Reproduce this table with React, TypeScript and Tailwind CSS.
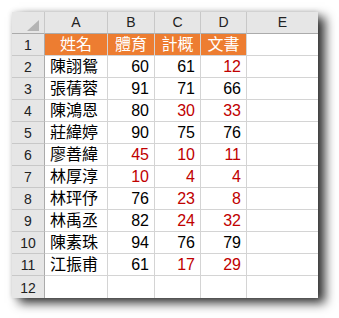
import React from "react";

const rows: [string, number, number, number][] = [
  ["陳詡鴛", 60, 61, 12],
  ["張蒨蓉", 91, 71, 66],
  ["陳鴻恩", 80, 30, 33],
  ["莊緯婷", 90, 75, 76],
  ["廖善緯", 45, 10, 11],
  ["林厚淳", 10, 4, 4],
  ["林玶伃", 76, 23, 8],
  ["林禹丞", 82, 24, 32],
  ["陳素珠", 94, 76, 79],
  ["江振甫", 61, 17, 29],
];

const font = { fontFamily: '"Liberation Sans", "Noto Sans CJK TC", sans-serif' };

function ColHead({ label, last }: { label: string; last?: boolean }) {
  return (
    <div
      className={`h-[22px] bg-[#e6e6e6] border-b border-b-[#ababab] ${last ? "" : "border-r border-r-[#c8c8c8]"} flex items-center justify-center text-[14px] text-[#222]`}
    >
      {label}
    </div>
  );
}

function RowHead({ n }: { n: number }) {
  return (
    <div className="h-[22px] bg-[#e6e6e6] border-r border-r-[#ababab] border-b border-b-[#c8c8c8] flex items-center justify-center pt-[2px] text-[14px] text-[#222]">
      {n}
    </div>
  );
}

function Num({ v }: { v: number }) {
  return (
    <div
      className={`h-[22px] border-r border-b border-[#d4d4d4] flex items-center justify-end pr-[5px] pt-[1px] text-[16px] ${v < 60 ? "text-[#c00000]" : "text-black"}`}
    >
      {v}
    </div>
  );
}

export default function App() {
  return (
    <div className="w-[339px] h-[318px] bg-white p-[12px]" style={font}>
      <div className="w-[306px] bg-white shadow-[7px_5px_10px_rgba(0,0,0,0.8),0_0_5px_rgba(0,0,0,0.15)]">
        <div className="grid grid-cols-[33px_63px_47px_46px_46px_71px]">
          <div className="h-[22px] bg-[#e6e6e6] border-r border-r-[#c8c8c8] border-b border-b-[#ababab] relative">
            <svg className="absolute right-[5px] bottom-[2px]" width="12" height="11" viewBox="0 0 12 11">
              <polygon points="12,0 12,11 0,11" fill="#b4b4b4" />
            </svg>
          </div>
          <ColHead label="A" />
          <ColHead label="B" />
          <ColHead label="C" />
          <ColHead label="D" />
          <ColHead label="E" last />

          <RowHead n={1} />
          {["姓名", "體育", "計概", "文書"].map((h) => (
            <div
              key={h}
              className="h-[22px] bg-[#ed7d31] border-r border-b border-[#d4d4d4] flex items-center justify-center text-[16px] text-white"
            >
              {h}
            </div>
          ))}
          <div className="h-[22px] border-b border-[#d4d4d4]" />

          {rows.map((r, i) => (
            <React.Fragment key={i}>
              <RowHead n={i + 2} />
              <div className="h-[22px] border-r border-b border-[#d4d4d4] flex items-center pl-[5px] text-[16px] text-black">
                {r[0]}
              </div>
              <Num v={r[1]} />
              <Num v={r[2]} />
              <Num v={r[3]} />
              <div className="h-[22px] border-b border-[#d4d4d4]" />
            </React.Fragment>
          ))}

          <div className="h-[22px] bg-[#e6e6e6] border-r border-r-[#ababab] flex items-center justify-center pt-[2px] text-[14px] text-[#222]">
            12
          </div>
          <div className="h-[22px] border-r border-[#d4d4d4]" />
          <div className="h-[22px] border-r border-[#d4d4d4]" />
          <div className="h-[22px] border-r border-[#d4d4d4]" />
          <div className="h-[22px] border-r border-[#d4d4d4]" />
          <div className="h-[22px]" />
        </div>
      </div>
    </div>
  );
}
